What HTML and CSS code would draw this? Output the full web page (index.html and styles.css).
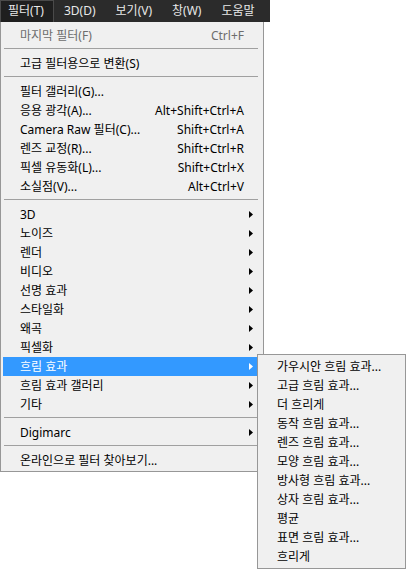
FILE: index.html
```html
<!DOCTYPE html>
<html lang="ko">
<head>
  <meta charset="UTF-8">
  <title>필터 메뉴</title>
  <link rel="stylesheet" href="styles.css">
</head>
<body>
  <div class="menubar">
    <span class="top-item active">필터(T)</span>
    <span class="top-item">3D(D)</span>
    <span class="top-item">보기(V)</span>
    <span class="top-item">창(W)</span>
    <span class="top-item">도움말</span>
  </div>

  <div class="dropdown">
    <ul class="menu main-menu">
      <li class="item disabled"><span class="label">마지막 필터(F)</span><span class="key">Ctrl+F</span></li>
      <li class="sep"></li>
      <li class="item"><span class="label">고급 필터용으로 변환(S)</span></li>
      <li class="sep"></li>
      <li class="item"><span class="label">필터 갤러리(G)...</span></li>
      <li class="item"><span class="label">응용 광각(A)...</span><span class="key">Alt+Shift+Ctrl+A</span></li>
      <li class="item"><span class="label">Camera Raw 필터(C)...</span><span class="key">Shift+Ctrl+A</span></li>
      <li class="item"><span class="label">렌즈 교정(R)...</span><span class="key">Shift+Ctrl+R</span></li>
      <li class="item"><span class="label">픽셀 유동화(L)...</span><span class="key">Shift+Ctrl+X</span></li>
      <li class="item"><span class="label">소실점(V)...</span><span class="key">Alt+Ctrl+V</span></li>
      <li class="sep"></li>
      <li class="item"><span class="label">3D</span><span class="arrow"></span></li>
      <li class="item"><span class="label">노이즈</span><span class="arrow"></span></li>
      <li class="item"><span class="label">렌더</span><span class="arrow"></span></li>
      <li class="item"><span class="label">비디오</span><span class="arrow"></span></li>
      <li class="item"><span class="label">선명 효과</span><span class="arrow"></span></li>
      <li class="item"><span class="label">스타일화</span><span class="arrow"></span></li>
      <li class="item"><span class="label">왜곡</span><span class="arrow"></span></li>
      <li class="item"><span class="label">픽셀화</span><span class="arrow"></span></li>
      <li class="item hl"><span class="label">흐림 효과</span><span class="arrow"></span></li>
      <li class="item"><span class="label">흐림 효과 갤러리</span><span class="arrow"></span></li>
      <li class="item"><span class="label">기타</span><span class="arrow"></span></li>
      <li class="sep"></li>
      <li class="item"><span class="label">Digimarc</span><span class="arrow"></span></li>
      <li class="sep"></li>
      <li class="item"><span class="label">온라인으로 필터 찾아보기...</span></li>
    </ul>

    <!-- submenu for 흐림 효과, overlaps the parent's right edge -->
    <ul class="menu sub-menu">
      <li class="item"><span class="label">가우시안 흐림 효과...</span></li>
      <li class="item"><span class="label">고급 흐림 효과...</span></li>
      <li class="item"><span class="label">더 흐리게</span></li>
      <li class="item"><span class="label">동작 흐림 효과...</span></li>
      <li class="item"><span class="label">렌즈 흐림 효과...</span></li>
      <li class="item"><span class="label">모양 흐림 효과...</span></li>
      <li class="item"><span class="label">방사형 흐림 효과...</span></li>
      <li class="item"><span class="label">상자 흐림 효과...</span></li>
      <li class="item"><span class="label">평균</span></li>
      <li class="item"><span class="label">표면 흐림 효과...</span></li>
      <li class="item"><span class="label">흐리게</span></li>
    </ul>
  </div>
</body>
</html>
```

FILE: styles.css
```css
body {
  margin: 0;
  background: #fff;
  font-family: "Noto Sans", "Noto Sans CJK KR", sans-serif;
  font-size: 12px;
  color: #000;
}
.menubar {
  width: 270px;
  height: 22px;
  background: #2b2b2b;
  display: flex;
  overflow: hidden;
  white-space: nowrap;
}
.top-item {
  padding: 0 10px;
  line-height: 22px;
  color: #e8e8e8;
}
.top-item.active {
  padding-left: 8px;
  background: #1f1f1f;
  box-shadow: inset 1px 0 0 #4a4a4a, inset -1px 0 0 #4a4a4a, inset 0 1px 0 #4a4a4a;
}
.dropdown {
  display: flex;
  align-items: flex-start;
}
.menu {
  list-style: none;
  margin: 0;
  background: #f0f0f0;
  border: 1px solid #979797;
}
.main-menu {
  flex: none;
  width: 257px;
  border-top: none;
  padding: 4px 3px 1px 2px;
}
.sub-menu {
  position: relative;
  flex: none;
  width: 143px;
  padding: 2px;
  margin-top: 332px;
  margin-left: -7px;
}
.item {
  display: grid;
  grid-template-columns: 1fr auto 16px;
  align-items: center;
  height: 19px;
  line-height: 19px;
  padding-left: 17px;
  white-space: nowrap;
}
.sub-menu .item {
  grid-template-columns: 1fr;
}
.item.hl {
  background: #3399ff;
  color: #fff;
}
.item.disabled {
  color: #6d6d6d;
}
.arrow {
  grid-column: 3;
  width: 4px;
  height: 7px;
  margin-left: 5px;
  background: currentColor;
  clip-path: polygon(0 0, 100% 50%, 0 100%);
}
.sep {
  height: 1px;
  background: #a0a0a0;
  margin: 3px 2px 5px 1px;
}
```
